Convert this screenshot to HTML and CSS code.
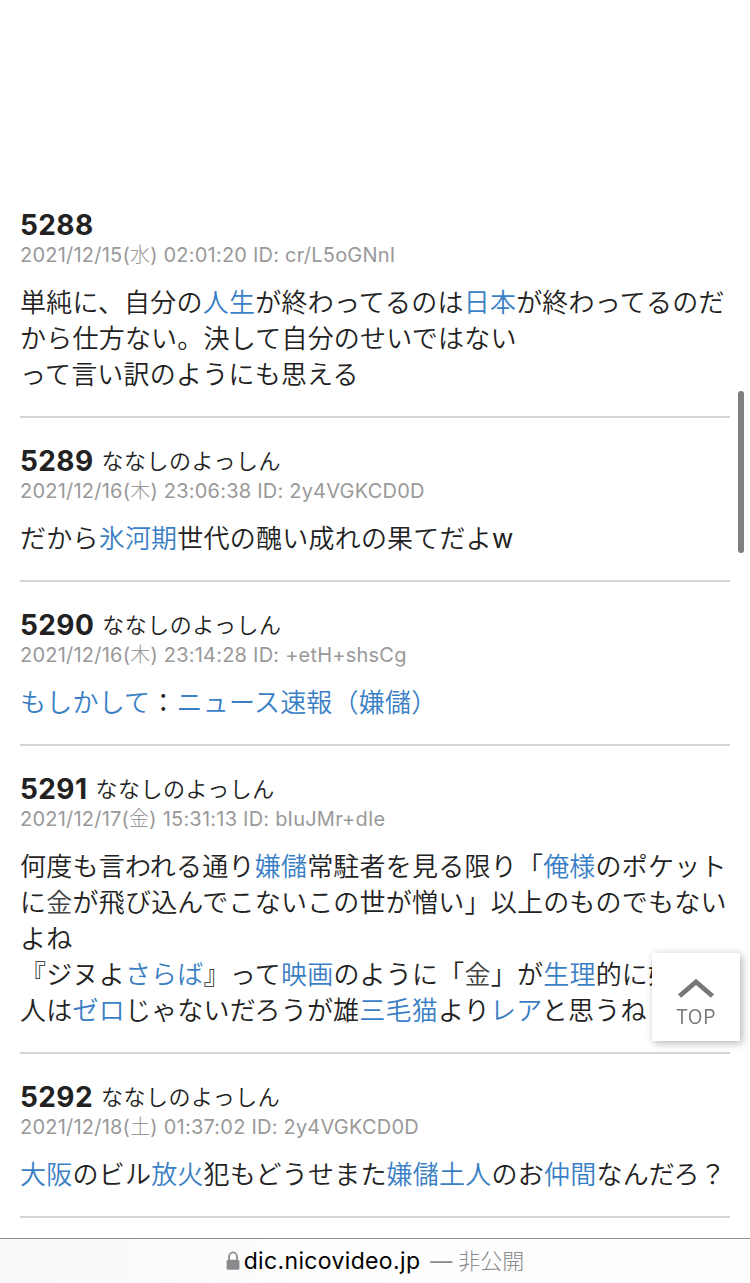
FILE: index.html
```html
<!DOCTYPE html>
<html lang="ja">
<head>
    <meta charset="UTF-8">
    <meta name="viewport" content="width=device-width, initial-scale=1.0">
    <title>掲示板</title>
    <link rel="stylesheet" href="styles.css">
</head>
<body>
    <main class="thread">
        <article class="post">
            <div class="post-head"><span class="post-no">5288</span></div>
            <div class="post-meta">2021/12/15(<span class="day">水</span>) 02:01:20 ID: cr/L5oGNnI</div>
            <p class="post-body">単純に、自分の<a href="#">人生</a>が終わってるのは<a href="#">日本</a>が終わってるのだから仕方ない。決して自分のせいではない<br>って言い訳のようにも思える</p>
        </article>
        <article class="post">
            <div class="post-head"><span class="post-no">5289</span><span class="post-name">ななしのよっしん</span></div>
            <div class="post-meta">2021/12/16(<span class="day">木</span>) 23:06:38 ID: 2y4VGKCD0D</div>
            <p class="post-body">だから<a href="#">氷河期</a>世代の醜い成れの果てだよ<span class="latin">w</span></p>
        </article>
        <article class="post">
            <div class="post-head"><span class="post-no">5290</span><span class="post-name">ななしのよっしん</span></div>
            <div class="post-meta">2021/12/16(<span class="day">木</span>) 23:14:28 ID: +etH+shsCg</div>
            <p class="post-body"><a href="#">もしかして</a>：<a href="#">ニュース速報（嫌儲）</a></p>
        </article>
        <article class="post">
            <div class="post-head"><span class="post-no">5291</span><span class="post-name">ななしのよっしん</span></div>
            <div class="post-meta">2021/12/17(<span class="day">金</span>) 15:31:13 ID: bIuJMr+dIe</div>
            <p class="post-body">何度も言われる通り<a href="#">嫌儲</a>常駐者を見る限り「<a href="#">俺様</a>のポケットに<a href="#" class="auto">金</a>が飛び込んでこないこの世が憎い」以上のものでもないよね<br>『ジヌよ<a href="#">さらば</a>』って<a href="#">映画</a>のように「<a href="#" class="auto">金</a>」が<a href="#">生理</a>的に好きな人は<a href="#">ゼロ</a>じゃないだろうが雄<a href="#">三毛猫</a>より<a href="#">レア</a>と思うね</p>
        </article>
        <article class="post">
            <div class="post-head"><span class="post-no">5292</span><span class="post-name">ななしのよっしん</span></div>
            <div class="post-meta">2021/12/18(<span class="day">土</span>) 01:37:02 ID: 2y4VGKCD0D</div>
            <p class="post-body"><a href="#">大阪</a>のビル<a href="#">放火</a>犯もどうせまた<a href="#">嫌儲</a><a href="#">土人</a>のお<a href="#">仲間</a>なんだろ？</p>
        </article>
    </main>

    <a href="#" class="page-top">
        <svg width="36" height="20" viewBox="0 0 36 20"><path d="M1.5 18 L18 4 L34.5 18" fill="none" stroke="#777" stroke-width="4.8"/></svg>
        <span>TOP</span>
    </a>
    <div class="scrollbar"></div>

    <footer class="address-bar">
        <svg class="lock" width="14" height="20" viewBox="0 0 14 20">
            <path d="M3 10V6a4 4.6 0 0 1 8 0v4" fill="none" stroke="#8a8a8e" stroke-width="1.8"/>
            <rect x="0.6" y="8.8" width="12.8" height="10" rx="1.6" fill="#8a8a8e"/>
        </svg>
        <span class="host">dic.nicovideo.jp</span>
        <span class="private"><span class="dash">—</span>非公開</span>
    </footer>
</body>
</html>
```
FILE: styles.css
```css
* {
    box-sizing: border-box;
}

body {
    margin: 0;
    height: 1283px;
    overflow: hidden;
    background: #fff;
    color: #222;
    font-family: Inter, "Noto Sans CJK JP", sans-serif;
    font-weight: 350;
}

a {
    color: #3a7fc5;
    text-decoration: none;
}

a.auto {
    color: #444;
}

.thread {
    padding: 182px 20px 0;
}

.post {
    padding: 25px 0 23px;
    border-bottom: 2px solid #d5d5d5;
}

.post-head {
    display: flex;
    height: 36px;
    line-height: 37px;
}

.post-no {
    font-size: 28px;
    font-weight: 700;
    letter-spacing: 0.4px;
}

.post-name {
    margin-left: 8px;
    font-size: 22px;
    letter-spacing: 0.5px;
}

.post-meta {
    height: 24px;
    line-height: 24px;
    font-size: 20px;
    font-weight: 400;
    letter-spacing: 0.22px;
    color: #999;
}

.day {
    font-weight: 300;
}

.post-body {
    margin: 18px 0 0;
    font-size: 26px;
    line-height: 36px;
    letter-spacing: 0.22px;
}

.latin {
    font-weight: 400;
}

.page-top {
    position: fixed;
    top: 953px;
    left: 652px;
    width: 88px;
    height: 88px;
    padding-top: 25px;
    display: flex;
    flex-direction: column;
    align-items: center;
    background: #fff;
    box-shadow: 2px 2px 8px rgba(0, 0, 0, 0.3);
    color: #777;
    font-family: "Noto Sans CJK JP", sans-serif;
    font-size: 20px;
    letter-spacing: 0.5px;
    line-height: 35px;
}

.scrollbar {
    position: fixed;
    top: 391px;
    right: 6px;
    width: 6px;
    height: 162px;
    border-radius: 3px;
    background: #7f7f7f;
}

.address-bar {
    position: fixed;
    left: 0;
    right: 0;
    bottom: 0;
    height: 45px;
    padding-bottom: 1px;
    display: flex;
    justify-content: center;
    align-items: center;
    border-top: 1px solid #8e8e8e;
    background: linear-gradient(90deg, #f8f8f8, #fdfdfd 40%, #fefefe);
    font-size: 23px;
    font-weight: 400;
}

.lock {
    margin-right: 4px;
}

.host {
    color: #000;
    letter-spacing: 0.35px;
}

.private {
    margin-left: 10px;
    color: #8a8a8e;
    font-size: 22px;
    font-weight: 300;
    line-height: 30px;
}

.dash {
    margin-right: 6px;
    font-weight: 400;
}
```
